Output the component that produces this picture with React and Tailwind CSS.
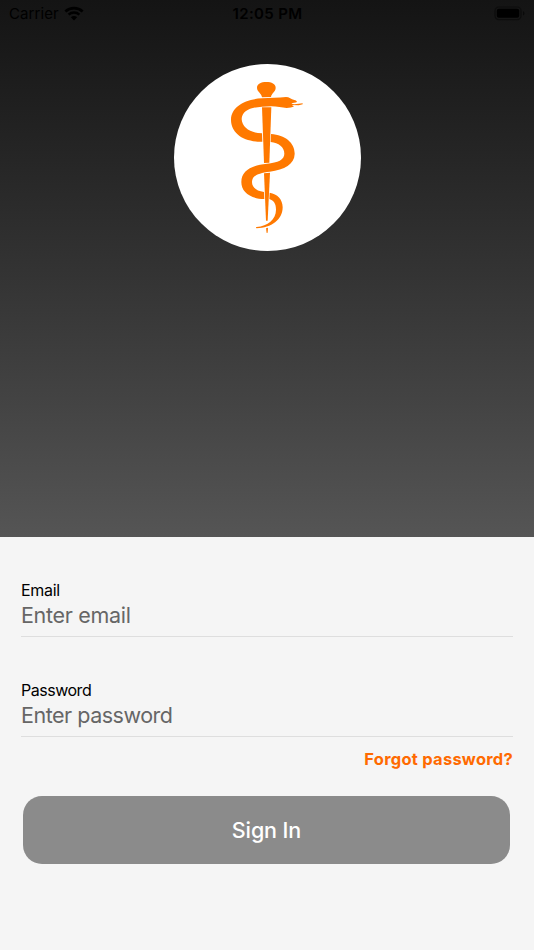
import React, { useState } from 'react';

const WifiIcon = () => (
  <svg viewBox="0 0 20 15" className="w-5 h-[15px] mb-[2px] fill-none stroke-black">
    <path d="M1.4 5.4C6.2.9 13.8.9 18.6 5.4" strokeWidth="2.7" />
    <path d="M4.6 8.7C7.6 5.9 12.4 5.9 15.4 8.7" strokeWidth="2.5" />
    <path d="M6.9 11.2C8.6 9.6 11.4 9.6 13.1 11.2L10 14.4Z" className="fill-black stroke-none" />
  </svg>
);

const BatteryIcon = () => (
  <svg viewBox="0 0 32 15" className="w-8 h-[15px] mb-[2px]">
    <rect x="1" y="1" width="26" height="12.6" rx="3.8" className="fill-none stroke-[#0d0d0d]" strokeWidth="1.2" />
    <rect x="2.8" y="2.8" width="22.4" height="9" rx="2" className="fill-black" />
    <path d="M29 5.2C30.9 5.8 30.9 8.8 29 9.4Z" className="fill-[#0a0a0a]" />
  </svg>
);

// Rod of Asclepius
const Logo = () => (
  <svg viewBox="0 0 300 495" className="w-[100px] h-[165px] fill-[#ff7900]">
    {/* staff */}
    <path d="M120 38C120 27 132 21 148 21C164 21 176 27 176 38C176 50 163 55 162 66L135 67C134 55 120 50 120 38Z" />
    <path d="M135 97L163 97L157 263L141 264Z" />
    <path d="M141 295L159 293L152 437H147Z" />
    <path d="M147 460L153 458L152 473L149 474Z" />
    {/* snake */}
    <path d="M135 70C158 68 185 68 207 66C217 66 222 73 232 75C237 76 239 78 240 81C235 84 228 82 223 86L232 88L245 86L257 85V88L245 91L224 90L231 94C226 97 218 99 209 99C195 98 180 94 163 94L135 95C98 97 75 109 74 132C75 158 101 174 135 175L136 200C80 201 42 175 42 134C43 95 83 73 135 70Z" />
    <path d="M162 177C205 180 234 204 233 237C232 268 203 284 158 290C124 294 105 302 105 321C105 337 118 348 141 351L142 372C99 371 73 351 73 321C73 287 103 271 150 266C183 263 202 254 202 236C202 216 185 204 161 201Z" />
    <path d="M158 353C181 357 197 373 197 397C197 434 163 459 119 460C116 459 116 456 119 456C152 453 177 433 177 404C177 387 171 377 157 372Z" />
  </svg>
);

const Field = ({ label, className, ...props }) => (
  <label className={`flex flex-col h-[100px] ${className}`}>
    <span className="text-[16px] leading-5 text-black">{label}</span>
    <input
      className="h-[31px] w-full bg-transparent text-[21.5px] leading-[31px] placeholder:text-[#666] placeholder:opacity-100 outline-none"
      {...props}
    />
    <span className="h-px mt-[5px] bg-[#dedede]" />
  </label>
);

const App = () => {
  const [email, setEmail] = useState('');
  const [password, setPassword] = useState('');

  return (
    <div className="flex flex-col h-[950px] w-[534px] bg-[#f5f5f5] font-['Inter',sans-serif] overflow-hidden">
      <header className="flex flex-col items-center h-[537px] bg-linear-to-b from-[#141414] to-[#555]">
        <div className="grid grid-cols-3 items-center w-full h-7 pl-[9px] pr-[8px] text-[15px] text-black">
          <div className="flex items-center gap-[5px]">
            <span className="tracking-[0.1px]">Carrier</span>
            <WifiIcon />
          </div>
          <span className="text-center font-semibold tracking-[0.35px]">12:05 PM</span>
          <div className="flex justify-end">
            <BatteryIcon />
          </div>
        </div>
        <div className="flex items-center justify-center size-[187px] mt-9 rounded-full bg-white">
          <Logo />
        </div>
      </header>

      <main className="flex flex-col px-[21px] pt-[43px]">
        <Field
          label="Email"
          type="email"
          placeholder="Enter email"
          className="tracking-[-0.3px]"
          value={email}
          onChange={(e) => setEmail(e.target.value)}
        />
        <Field
          label="Password"
          type="password"
          placeholder="Enter password"
          className="tracking-[-0.48px]"
          value={password}
          onChange={(e) => setPassword(e.target.value)}
        />
        <button type="button" className="self-end -mt-[31px] text-[16.5px] leading-5 font-bold tracking-[0.25px] text-[#ff6a00]">
          Forgot password?
        </button>
        <button
          type="button"
          className="h-[68px] mt-[27px] ml-[2px] mr-[3px] rounded-[19px] bg-[#8b8b8b] text-[21.5px] font-medium tracking-[-0.1px] text-white"
        >
          Sign In
        </button>
      </main>
    </div>
  );
};

export default App;
